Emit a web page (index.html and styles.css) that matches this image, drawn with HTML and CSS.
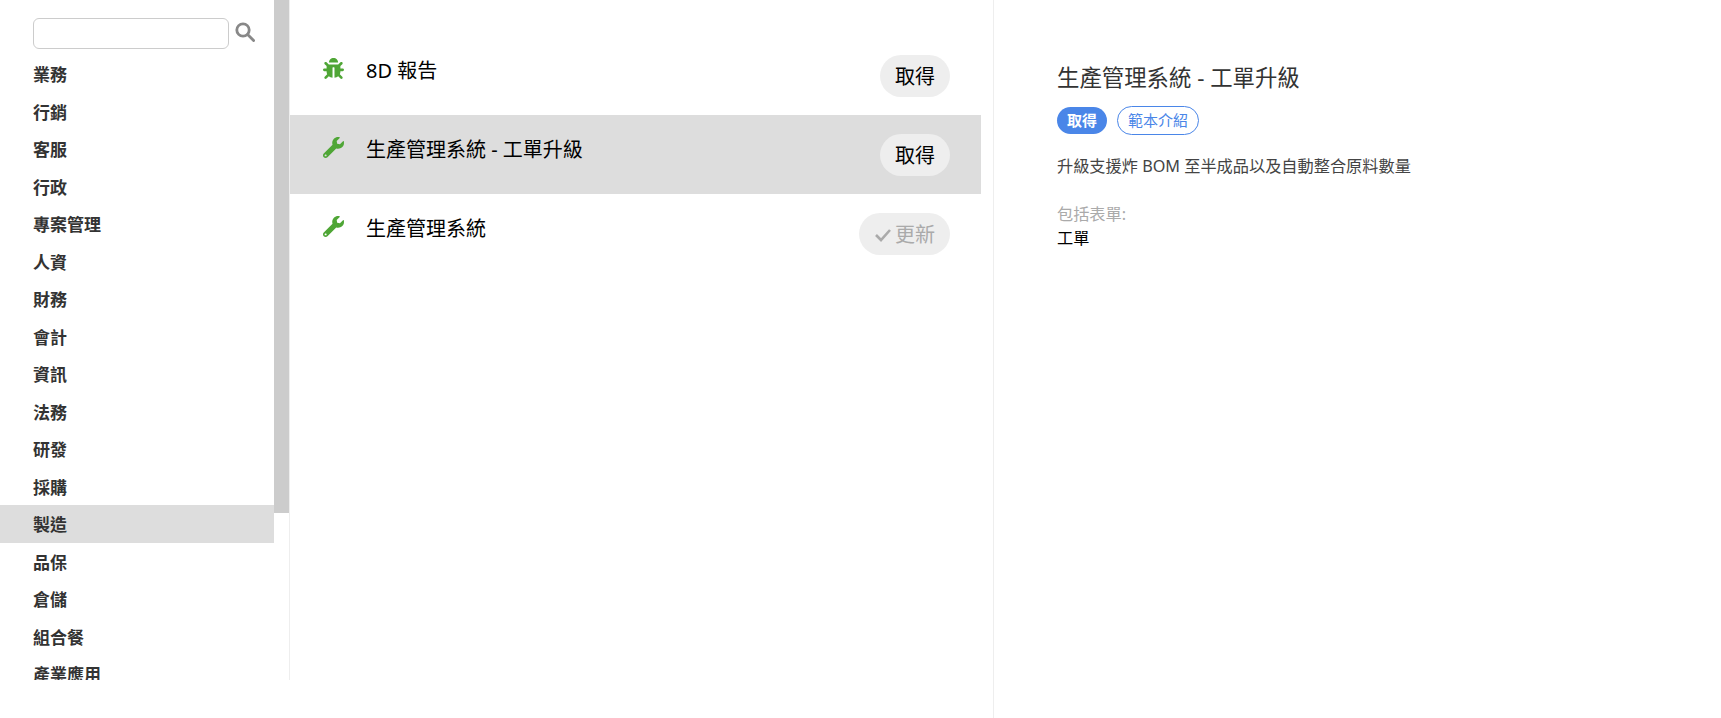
FILE: index.html
```html
<!DOCTYPE html>
<html lang="zh-Hant">
<head>
<meta charset="utf-8">
<title>範本</title>
<link rel="stylesheet" href="styles.css">
</head>
<body>
<div class="app">
  <aside class="sidebar">
    <div class="sidebar-inner">
      <div class="search">
        <input class="search-input" type="text">
        <svg class="search-icon" viewBox="0 0 20 20"><circle cx="8" cy="8" r="6.2"/><line x1="12.6" y1="12.6" x2="18.6" y2="18.6"/></svg>
      </div>
      <ul class="cats">
        <li class="cat">業務</li>
        <li class="cat">行銷</li>
        <li class="cat">客服</li>
        <li class="cat">行政</li>
        <li class="cat">專案管理</li>
        <li class="cat">人資</li>
        <li class="cat">財務</li>
        <li class="cat">會計</li>
        <li class="cat">資訊</li>
        <li class="cat">法務</li>
        <li class="cat">研發</li>
        <li class="cat">採購</li>
        <li class="cat cat-active">製造</li>
        <li class="cat">品保</li>
        <li class="cat">倉儲</li>
        <li class="cat">組合餐</li>
        <li class="cat">產業應用</li>
      </ul>
    </div>
    <div class="scrollbar"><div class="scrollbar-thumb"></div></div>
  </aside>
  <main class="list">
    <div class="row">
      <svg class="row-icon" viewBox="0 0 512 512"><path d="M511.988 288.9c-.478 17.43-15.217 31.1-32.653 31.1H424v16c0 21.864-4.882 42.584-13.6 61.145l60.228 60.228c12.496 12.497 12.496 32.758 0 45.255-12.498 12.497-32.759 12.496-45.256 0l-54.736-54.736C345.886 467.965 314.351 480 280 480V236c0-6.627-5.373-12-12-12h-24c-6.627 0-12 5.373-12 12v244c-34.351 0-65.886-12.035-90.636-32.108l-54.736 54.736c-12.498 12.497-32.759 12.496-45.256 0-12.496-12.497-12.496-32.758 0-45.255l60.228-60.228C92.882 378.584 88 357.864 88 336v-16H32.666C15.23 320 .491 306.33.013 288.9-.484 270.816 14.028 256 32 256h56v-58.745l-46.628-46.628c-12.496-12.497-12.496-32.758 0-45.255 12.498-12.497 32.758-12.497 45.256 0L141.255 160h229.489l54.627-54.627c12.498-12.497 32.758-12.497 45.256 0 12.496 12.497 12.496 32.758 0 45.255L424 197.255V256h56c17.972 0 32.484 14.816 31.988 32.9zM257 0c-61.856 0-112 50.144-112 112h224C369 50.144 318.856 0 257 0z"/></svg>
      <span class="row-title">8D 報告</span>
      <button class="pill">取得</button>
    </div>
    <div class="row row-active">
      <svg class="row-icon" viewBox="0 0 512 512"><path d="M507.73 109.1c-2.24-9.03-13.54-12.09-20.12-5.51l-74.36 74.36-67.88-11.31-11.31-67.88 74.36-74.36c6.62-6.62 3.43-17.9-5.66-20.16-47.38-11.74-99.55.91-136.58 37.93-39.64 39.64-50.55 97.1-34.05 147.2L18.74 402.76c-24.99 24.99-24.99 65.51 0 90.5 24.99 24.99 65.51 24.99 90.5 0l213.21-213.21c50.12 16.71 107.47 5.68 147.37-34.22 37.07-37.07 49.7-89.32 37.91-136.73zM64 472c-13.25 0-24-10.75-24-24 0-13.26 10.75-24 24-24s24 10.74 24 24c0 13.25-10.75 24-24 24z"/></svg>
      <span class="row-title">生產管理系統 - 工單升級</span>
      <button class="pill">取得</button>
    </div>
    <div class="row">
      <svg class="row-icon" viewBox="0 0 512 512"><path d="M507.73 109.1c-2.24-9.03-13.54-12.09-20.12-5.51l-74.36 74.36-67.88-11.31-11.31-67.88 74.36-74.36c6.62-6.62 3.43-17.9-5.66-20.16-47.38-11.74-99.55.91-136.58 37.93-39.64 39.64-50.55 97.1-34.05 147.2L18.74 402.76c-24.99 24.99-24.99 65.51 0 90.5 24.99 24.99 65.51 24.99 90.5 0l213.21-213.21c50.12 16.71 107.47 5.68 147.37-34.22 37.07-37.07 49.7-89.32 37.91-136.73zM64 472c-13.25 0-24-10.75-24-24 0-13.26 10.75-24 24-24s24 10.74 24 24c0 13.25-10.75 24-24 24z"/></svg>
      <span class="row-title">生產管理系統</span>
      <button class="pill pill-done"><svg class="check" viewBox="0 0 18 14"><polyline points="2,7 7,12 16,2"/></svg>更新</button>
    </div>
  </main>
  <section class="detail">
    <h1 class="detail-title">生產管理系統 - 工單升級</h1>
    <div class="actions">
      <span class="badge badge-solid">取得</span>
      <span class="badge badge-outline">範本介紹</span>
    </div>
    <p class="desc">升級支援炸 BOM 至半成品以及自動整合原料數量</p>
    <div class="inc-label">包括表單:</div>
    <div class="inc-value">工單</div>
  </section>
</div>
</body>
</html>
```
FILE: styles.css
```css
* { box-sizing: border-box; }
html, body { margin: 0; height: 100%; overflow: hidden; background: #fff; }
body { font-family: "Noto Sans", "Noto Sans CJK TC", sans-serif; color: #000; }
.app { display: flex; height: 718px; align-items: flex-start; }

.sidebar { width: 290px; height: 680px; flex: none; border-right: 1px solid #eee; overflow: hidden; display: flex; }
.sidebar-inner { width: 274px; flex: none; }
.scrollbar { width: 15px; flex: none; }
.scrollbar-thumb { height: 513px; background: #ccc; }
.search { display: flex; align-items: flex-start; gap: 6px; padding: 18px 0 0 33px; height: 55px; }
.search-input { width: 196px; height: 31px; border: 1px solid #ccc; border-radius: 6px; background: #fff; outline: none; }
.search-icon { width: 20px; height: 20px; fill: none; stroke: #888; stroke-width: 2.8; stroke-linecap: round; margin-top: 4px; }
.cats { list-style: none; margin: 0; padding: 0; }
.cat { height: 37.5px; line-height: 39.5px; padding-left: 33px; font-size: 17px; font-weight: 700; color: #333; }
.cat-active { background: #ddd; }

.list { width: 704px; height: 718px; flex: none; padding-top: 36px; border-right: 1px solid #eee; }
.row { width: 691px; height: 79px; display: flex; align-items: flex-start; }
.row-active { background: #ddd; }
.row-icon { width: 21px; height: 21px; fill: #4fa636; margin: 22px 0 0 33px; flex: none; }
.row-title { margin: 19px 0 0 22px; font-size: 20px; line-height: 32px; flex: 1; }
.pill { margin: 19px 31px 0 0; height: 42px; padding: 0 15px; border: 0; border-radius: 21px; background: #eee; color: #000; font: inherit; font-size: 20px; line-height: 44px; display: flex; align-items: flex-start; }
.pill-done { color: #aaa; }
.check { width: 18px; height: 14px; fill: none; stroke: #aaa; stroke-width: 2.6; margin: 15px 3px 0 0; }

.detail { flex: 1; padding: 60px 0 0 63px; }
.detail-title { margin: 0; font-size: 22.4px; line-height: 36px; font-weight: 400; color: #333; }
.actions { display: flex; align-items: center; gap: 10px; margin-top: 10px; }
.badge { font-size: 15px; border-radius: 15px; display: block; text-align: center; }
.badge-solid { width: 50px; height: 27px; line-height: 27px; background: #4a86e8; color: #fff; font-weight: 700; }
.badge-outline { width: 82px; height: 29px; line-height: 27px; border: 1px solid #4a86e8; color: #4a86e8; }
.desc { margin: 16px 0 0; font-size: 16.2px; line-height: 30px; color: #444; }
.inc-label { margin-top: 22px; font-size: 16.2px; line-height: 23px; color: #aaa; }
.inc-value { font-size: 16.2px; line-height: 24px; color: #000; }
```
